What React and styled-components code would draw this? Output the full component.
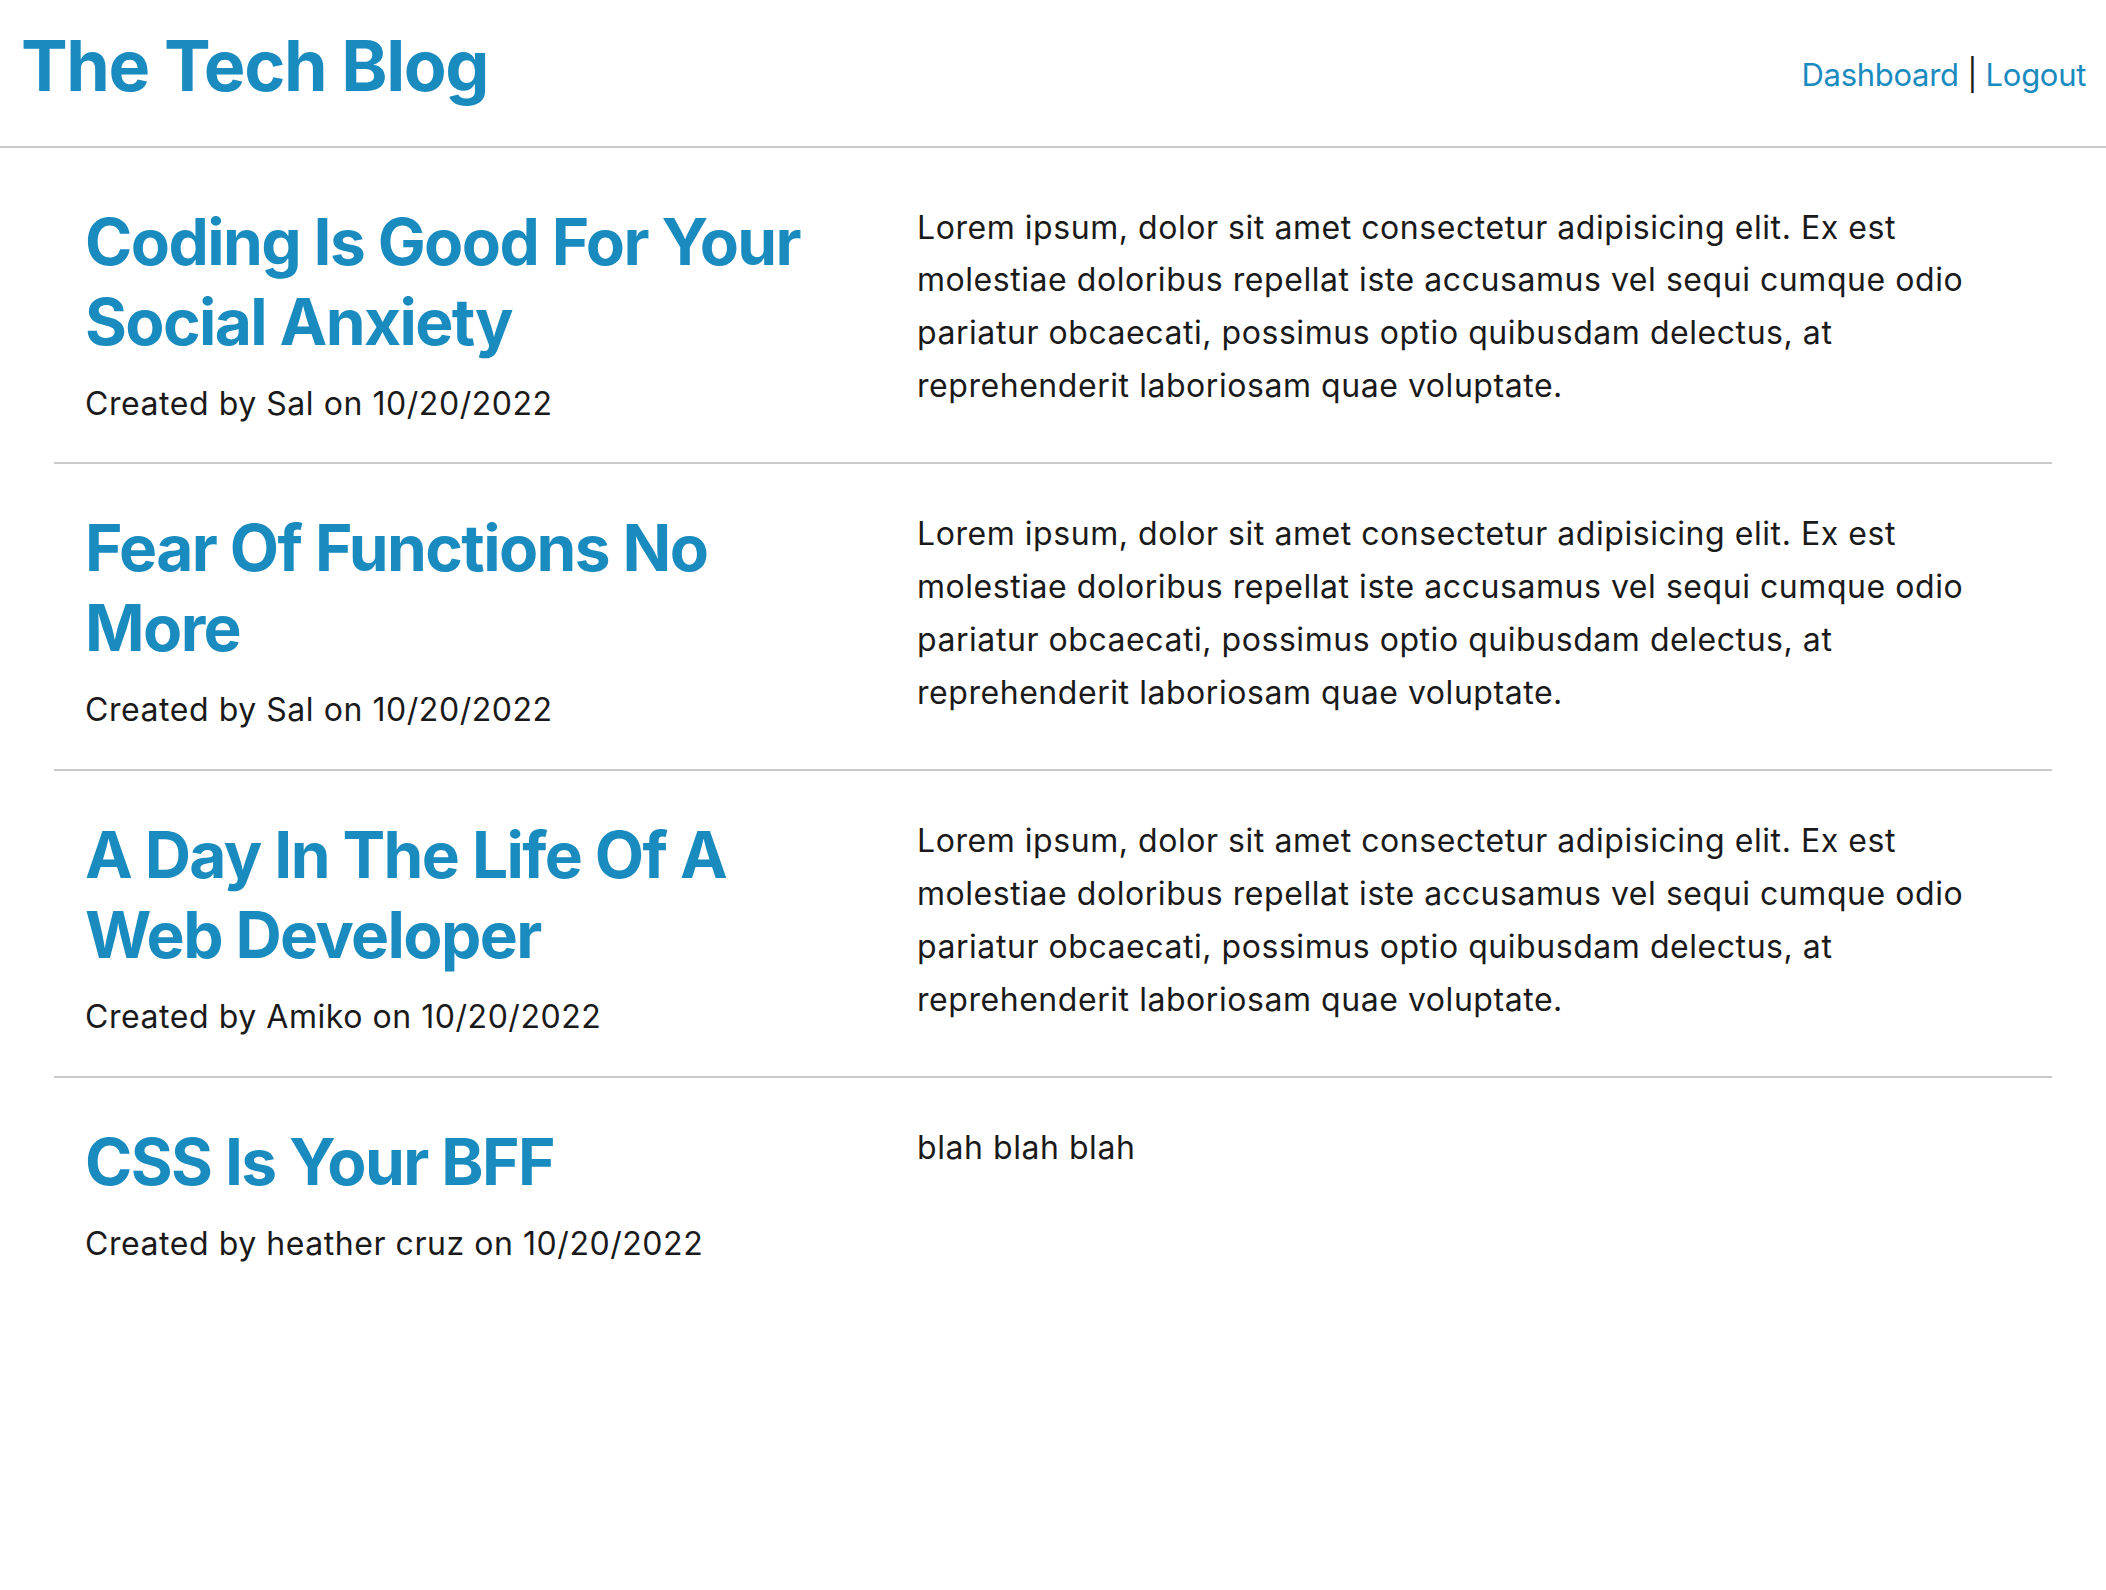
import React from 'react';
import styled, { createGlobalStyle } from 'styled-components';

const GlobalStyle = createGlobalStyle`
  body {
    margin: 0;
    background: #fff;
    color: #1a1a1a;
    font-family: Inter, "Noto Sans", "Liberation Sans", sans-serif;
  }
`;

const posts = [
  {
    id: 1,
    title: 'Coding Is Good For Your Social Anxiety',
    author: 'Sal',
    date: '10/20/2022',
    body: 'Lorem ipsum, dolor sit amet consectetur adipisicing elit. Ex est molestiae doloribus repellat iste accusamus vel sequi cumque odio pariatur obcaecati, possimus optio quibusdam delectus, at reprehenderit laboriosam quae voluptate.',
  },
  {
    id: 2,
    title: 'Fear Of Functions No More',
    author: 'Sal',
    date: '10/20/2022',
    body: 'Lorem ipsum, dolor sit amet consectetur adipisicing elit. Ex est molestiae doloribus repellat iste accusamus vel sequi cumque odio pariatur obcaecati, possimus optio quibusdam delectus, at reprehenderit laboriosam quae voluptate.',
  },
  {
    id: 3,
    title: 'A Day In The Life Of A Web Developer',
    author: 'Amiko',
    date: '10/20/2022',
    body: 'Lorem ipsum, dolor sit amet consectetur adipisicing elit. Ex est molestiae doloribus repellat iste accusamus vel sequi cumque odio pariatur obcaecati, possimus optio quibusdam delectus, at reprehenderit laboriosam quae voluptate.',
  },
  {
    id: 4,
    title: 'CSS Is Your BFF',
    author: 'heather cruz',
    date: '10/20/2022',
    body: 'blah blah blah',
  },
];

const Header = styled.header`
  display: flex;
  justify-content: space-between;
  align-items: flex-start;
  padding: 24px 20px 37px 21px;
  border-bottom: 2px solid #cacaca;
`;

const SiteTitle = styled.h1`
  margin: 0;
  font-size: 70px;
  font-weight: 700;
  line-height: 1.21;
  color: #1a8bbf;
  letter-spacing: -1.4px;
`;

const Nav = styled.nav`
  margin-top: 32px;
  font-size: 31px;
  line-height: 1.21;
  letter-spacing: -0.3px;
  color: #1a1a1a;
`;

const NavLink = styled.a`
  color: #1a8bbf;
  text-decoration: none;
`;

const Main = styled.main`
  padding: 10px 54px 0;
`;

const PostRow = styled.article`
  display: grid;
  grid-template-columns: 740px 1fr;
  column-gap: 92px;
  padding: 44px 31px 32px;
  border-bottom: ${({ last }) => (last ? 'none' : '2px solid #cacaca')};
`;

const PostTitle = styled.h2`
  margin: 0;
  font-size: 64px;
  font-weight: 700;
  line-height: 80px;
  color: #1a8bbf;
  letter-spacing: -1.6px;
`;

const Meta = styled.p`
  margin: 16px 0 0;
  font-size: 32px;
  line-height: 52.8px;
  letter-spacing: 0.55px;
  white-space: nowrap;
`;

const Body = styled.p`
  margin: 0;
  font-size: 32px;
  line-height: 52.8px;
  letter-spacing: 0.55px;
`;

const Post = ({ post, last }) => (
  <PostRow last={last}>
    <div>
      <PostTitle>{post.title}</PostTitle>
      <Meta>
        Created by {post.author} on {post.date}
      </Meta>
    </div>
    <Body>{post.body}</Body>
  </PostRow>
);

export default function App() {
  return (
    <>
      <GlobalStyle />
      <Header>
        <SiteTitle>The Tech Blog</SiteTitle>
        <Nav>
          <NavLink href="#">Dashboard</NavLink> | <NavLink href="#">Logout</NavLink>
        </Nav>
      </Header>
      <Main>
        {posts.map((post, i) => (
          <Post key={post.id} post={post} last={i === posts.length - 1} />
        ))}
      </Main>
    </>
  );
}
